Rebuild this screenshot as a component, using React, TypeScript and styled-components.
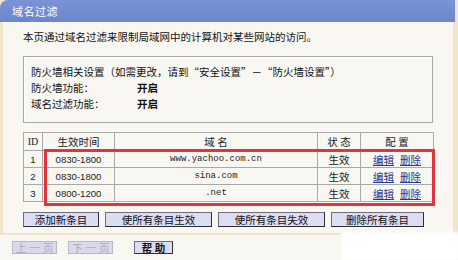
import { createGlobalStyle, styled } from "styled-components"

const GlobalStyle = createGlobalStyle`
  html, body {
    margin: 0;
    padding: 0;
    background: #f8f7f2;
  }
  body {
    font-family: "Noto Sans CJK SC", "Noto Sans", sans-serif;
    font-size: 10.5px;
    color: #111;
  }
`

const rows = [
  { id: 1, time: "0830-1800", domain: "www.yachoo.com.cn", state: "生效" },
  { id: 2, time: "0830-1800", domain: "sina.com", state: "生效" },
  { id: 3, time: "0800-1200", domain: ".net", state: "生效" },
]

const App = () => {
  return (
    <Page>
      <GlobalStyle />
      <Frame>
        <TitleBar>域名过滤</TitleBar>
        <Body>
          <Intro>本页通过域名过滤来限制局域网中的计算机对某些网站的访问。</Intro>
          <InfoBox>
            <InfoLine>防火墙相关设置（如需更改，请到“安全设置”－“防火墙设置”）</InfoLine>
            <InfoLine>
              <Label>防火墙功能：</Label>
              <Value>开启</Value>
            </InfoLine>
            <InfoLine>
              <Label>域名过滤功能：</Label>
              <Value>开启</Value>
            </InfoLine>
          </InfoBox>
          <RuleTable>
            <colgroup>
              <col style={{ width: 19 }} />
              <col style={{ width: 72 }} />
              <col style={{ width: 203 }} />
              <col style={{ width: 43 }} />
              <col style={{ width: 73 }} />
            </colgroup>
            <thead>
              <tr>
                <Th $serif>ID</Th>
                <Th>生效时间</Th>
                <Th>域 名</Th>
                <Th>状 态</Th>
                <Th>配 置</Th>
              </tr>
            </thead>
            <tbody>
              {rows.map((r) => (
                <tr key={r.id}>
                  <Td $digits>{r.id}</Td>
                  <Td $digits>{r.time}</Td>
                  <Td $mono>{r.domain}</Td>
                  <Td>{r.state}</Td>
                  <Td>
                    <Links>
                      <LinkText>编辑</LinkText>
                      <LinkText>删除</LinkText>
                    </Links>
                  </Td>
                </tr>
              ))}
            </tbody>
          </RuleTable>
          <ActionRow>
            <ActionButton $w={76}>添加新条目</ActionButton>
            <ActionButton $w={107}>使所有条目生效</ActionButton>
            <ActionButton $w={107}>使所有条目失效</ActionButton>
            <ActionButton $w={93}>删除所有条目</ActionButton>
          </ActionRow>
          <Highlight />
        </Body>
      </Frame>
      <Footer>
        <NavButton $w={45} disabled>上一页</NavButton>
        <NavButton $w={45} disabled>下一页</NavButton>
        <HelpButton>帮 助</HelpButton>
      </Footer>
      <Smudge />
    </Page>
  )
}

const Page = styled.div`
  position: relative;
  width: 458px;
  height: 260px;
  overflow: hidden;
  background: #f8f7f2;
  display: flex;
  flex-direction: column;
`

const Frame = styled.div`
  display: flex;
  flex-direction: column;
  width: 458px;
  background: #f1e4c9;
  padding-bottom: 2px;
`

const TitleBar = styled.div`
  width: 443px;
  height: 22px;
  padding-left: 12px;
  display: flex;
  align-items: center;
  background: linear-gradient(#7a93d6, #6b86cc);
  border-top-left-radius: 8px;
  color: #fff;
  font-size: 11px;
  letter-spacing: 0.5px;
`

const Body = styled.div`
  position: relative;
  margin-left: 3px;
  width: 450px;
  padding: 8px 0 6px 20px;
  box-sizing: border-box;
  background: #f8f7f2;
  display: flex;
  flex-direction: column;
`

const Intro = styled.div`
  height: 14px;
  line-height: 14px;
`

const InfoBox = styled.div`
  margin-top: 12px;
  width: 410px;
  height: 67px;
  box-sizing: border-box;
  border: 1px solid #a7a7a7;
  box-shadow: inset 1px 1px 0 #ffffff;
  padding: 7px 0 0 7px;
`

const InfoLine = styled.div`
  display: flex;
  height: 16px;
  line-height: 16px;
`

const Label = styled.span`
  width: 106px;
`

const Value = styled.span`
  font-weight: bold;
`

const RuleTable = styled.table`
  margin-top: 9px;
  width: 410px;
  border-collapse: collapse;
  table-layout: fixed;
  border: 1px solid #a3a3a3;
`

const Th = styled.th<{ $serif?: boolean }>`
  height: 17px;
  padding: 0;
  font-weight: normal;
  text-align: center;
  border: 1px solid #a9a9a9;
  font-family: ${(p) =>
    p.$serif ? `"Liberation Serif", serif` : `"Noto Sans CJK SC", sans-serif`};
  font-size: ${(p) => (p.$serif ? "10px" : "10.5px")};
  color: #222;
`

const Td = styled.td<{ $mono?: boolean; $digits?: boolean }>`
  height: 16px;
  padding: 0;
  text-align: center;
  border: 1px solid #a9a9a9;
  white-space: nowrap;
  font-family: ${(p) =>
    p.$mono
      ? `"Liberation Mono", monospace`
      : p.$digits
        ? `"Liberation Sans", sans-serif`
        : `"Noto Sans CJK SC", sans-serif`};
  font-size: ${(p) => (p.$mono ? "9px" : p.$digits ? "9.6px" : "10.5px")};
  color: #222;
`

const Links = styled.span`
  display: inline-flex;
  gap: 6px;
`

const LinkText = styled.span`
  color: #28388c;
  text-decoration: underline;
  text-underline-offset: 1px;
`

const ActionRow = styled.div`
  display: flex;
  gap: 6px;
  margin-top: 10px;
`

const ActionButton = styled.button<{ $w: number }>`
  width: ${(p) => p.$w}px;
  height: 15px;
  padding: 0;
  margin: 0;
  background: #dcdcf3;
  border: 1px solid #6d6d80;
  border-right-color: #2c2c34;
  border-bottom-color: #2c2c34;
  font-family: "Noto Sans CJK SC", sans-serif;
  font-size: 10.5px;
  line-height: 12px;
  white-space: nowrap;
  color: #111;
`

const Highlight = styled.div`
  position: absolute;
  left: 41px;
  top: 127px;
  width: 391px;
  height: 57px;
  border: 3px solid #e2343c;
  box-sizing: border-box;
  pointer-events: none;
`

const Footer = styled.div`
  display: flex;
  align-items: center;
  gap: 11px;
  padding: 6px 0 0 12px;
`

const NavButton = styled.button<{ $w: number }>`
  width: ${(p) => p.$w}px;
  height: 13px;
  padding: 0;
  background: #d9d9ea;
  border: 1px solid #b7b7c8;
  font-family: "Noto Sans CJK SC", sans-serif;
  font-size: 10.5px;
  line-height: 11px;
  letter-spacing: 3px;
  text-indent: 3px;
  white-space: nowrap;
  overflow: hidden;
  color: #a9a9bb;

  &:disabled {
    color: #a9a9bb;
  }
`

const HelpButton = styled.button`
  width: 39px;
  height: 13px;
  margin-left: 10px;
  padding: 0;
  background: #dcdcf3;
  border: 1px solid #6d6d80;
  border-right-color: #2c2c34;
  border-bottom-color: #2c2c34;
  font-family: "Noto Sans CJK SC", sans-serif;
  font-size: 10.5px;
  line-height: 11px;
  font-weight: bold;
  white-space: nowrap;
  color: #111;
`

const Smudge = styled.div`
  position: absolute;
  left: 341px;
  top: 232px;
  width: 117px;
  height: 28px;
  background: #ffffff;
  border-top-left-radius: 4px;
  filter: blur(1px);
`

export default App
